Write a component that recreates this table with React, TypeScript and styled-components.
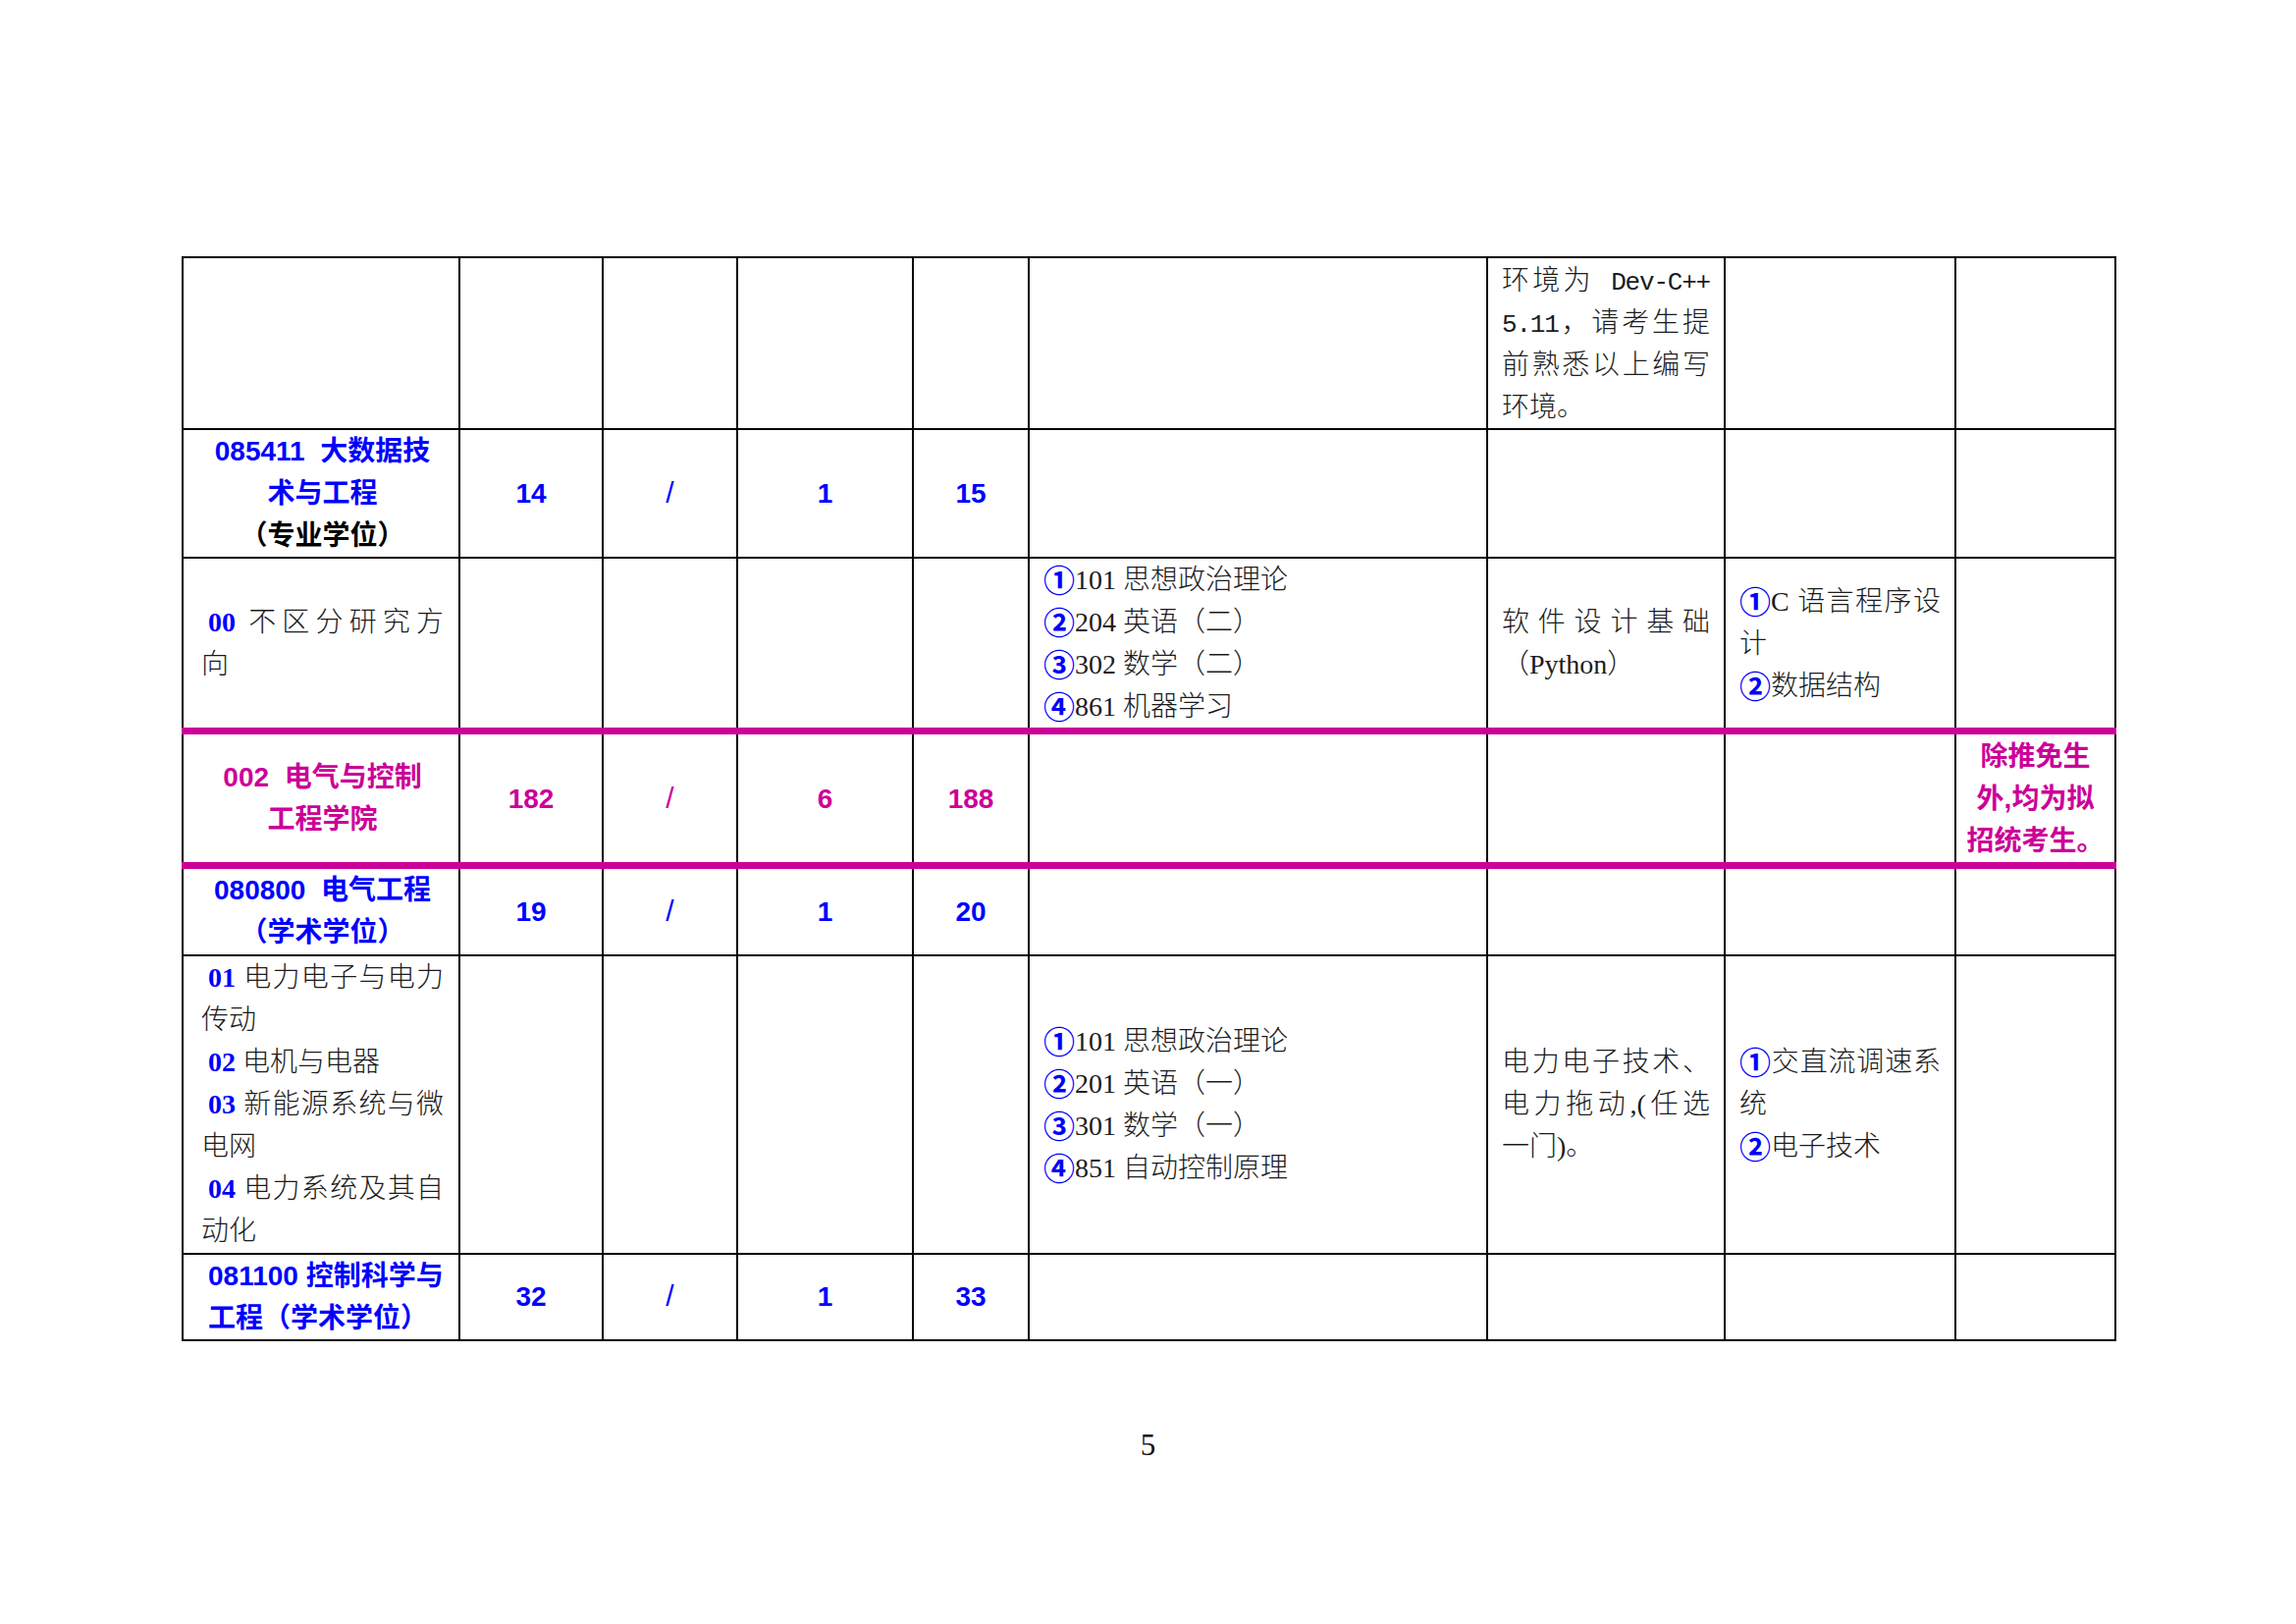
import styled, { createGlobalStyle } from "styled-components";

const BLUE = "#0000ff";
const PINK = "#cc0099";
const SERIF = `"Liberation Serif", "Noto Sans CJK SC", serif`;
const SANS = `"Liberation Sans", "Noto Sans CJK SC", sans-serif`;

type Tone = "blue" | "pink" | "black";
const toneColor = (t: Tone) => (t === "blue" ? BLUE : t === "pink" ? PINK : "#000000");

const widths = [282, 146, 137, 179, 118, 467, 242, 235, 163];

const App = () => {
    return (
        <>
            <GlobalStyle />
            <Page>
                <Sheet>
                    <colgroup>
                        {widths.map((w, i) => (
                            <Col key={i} $w={w} />
                        ))}
                    </colgroup>
                    <tbody>
                        <Row $h={175}>
                            <Cell $first />
                            <Cell />
                            <Cell />
                            <Cell />
                            <Cell />
                            <Cell />
                            <Cell>
                                <Line $justify>
                                    环境为<Mono> Dev-C++</Mono>
                                </Line>
                                <Line $justify>
                                    <Mono>5.11</Mono>，请考生提
                                </Line>
                                <Line $justify>前熟悉以上编写</Line>
                                <Line>环境。</Line>
                            </Cell>
                            <Cell />
                            <Cell />
                        </Row>

                        <Row $h={131}>
                            <Cell $first $align="center">
                                <Line>
                                    <Bold $tone="blue">085411{"\u00a0\u00a0"}大数据技</Bold>
                                </Line>
                                <Line>
                                    <Bold $tone="blue">术与工程</Bold>
                                </Line>
                                <Line>
                                    <Bold $tone="black">（专业学位）</Bold>
                                </Line>
                            </Cell>
                            <NumCells tone="blue" values={["14", "/", "1", "15"]} />
                            <Cell />
                            <Cell />
                            <Cell />
                            <Cell />
                        </Row>

                        <Row $h={175}>
                            <Cell $first>
                                <Line $justify $indent>
                                    <Code>00</Code> 不区分研究方
                                </Line>
                                <Line>向</Line>
                            </Cell>
                            <Cell />
                            <Cell />
                            <Cell />
                            <Cell />
                            <Cell>
                                <Line><Circ>①</Circ>101 思想政治理论</Line>
                                <Line><Circ>②</Circ>204 英语（二）</Line>
                                <Line><Circ>③</Circ>302 数学（二）</Line>
                                <Line><Circ>④</Circ>861 机器学习</Line>
                            </Cell>
                            <Cell>
                                <Line $justify>软件设计基础</Line>
                                <Line>（Python）</Line>
                            </Cell>
                            <Cell>
                                <Line $justify><Circ>①</Circ>C 语言程序设</Line>
                                <Line>计</Line>
                                <Line><Circ>②</Circ>数据结构</Line>
                            </Cell>
                            <Cell />
                        </Row>

                        <Row $h={137} $accent>
                            <Cell $first $align="center">
                                <Line>
                                    <Bold $tone="pink">002{"\u00a0\u00a0"}电气与控制</Bold>
                                </Line>
                                <Line>
                                    <Bold $tone="pink">工程学院</Bold>
                                </Line>
                            </Cell>
                            <NumCells tone="pink" values={["182", "/", "6", "188"]} />
                            <Cell />
                            <Cell />
                            <Cell />
                            <Cell $narrow $align="center">
                                <Line><Bold $tone="pink">除推免生</Bold></Line>
                                <Line><Bold $tone="pink">外,均为拟</Bold></Line>
                                <Line><Bold $tone="pink">招统考生。</Bold></Line>
                            </Cell>
                        </Row>

                        <Row $h={91}>
                            <Cell $first $align="center">
                                <Line>
                                    <Bold $tone="blue">080800{"\u00a0\u00a0"}电气工程</Bold>
                                </Line>
                                <Line>
                                    <Bold $tone="blue">（学术学位）</Bold>
                                </Line>
                            </Cell>
                            <NumCells tone="blue" values={["19", "/", "1", "20"]} />
                            <Cell />
                            <Cell />
                            <Cell />
                            <Cell />
                        </Row>

                        <Row $h={304}>
                            <Cell $first>
                                <Line $justify $indent><Code>01</Code> 电力电子与电力</Line>
                                <Line>传动</Line>
                                <Line $indent><Code>02</Code> 电机与电器</Line>
                                <Line $justify $indent><Code>03</Code> 新能源系统与微</Line>
                                <Line>电网</Line>
                                <Line $justify $indent><Code>04</Code> 电力系统及其自</Line>
                                <Line>动化</Line>
                            </Cell>
                            <Cell />
                            <Cell />
                            <Cell />
                            <Cell />
                            <Cell>
                                <Line><Circ>①</Circ>101 思想政治理论</Line>
                                <Line><Circ>②</Circ>201 英语（一）</Line>
                                <Line><Circ>③</Circ>301 数学（一）</Line>
                                <Line><Circ>④</Circ>851 自动控制原理</Line>
                            </Cell>
                            <Cell>
                                <Line $justify>电力电子技术、</Line>
                                <Line $justify>电力拖动,(任选</Line>
                                <Line>一门)。</Line>
                            </Cell>
                            <Cell>
                                <Line $justify><Circ>①</Circ>交直流调速系</Line>
                                <Line>统</Line>
                                <Line><Circ>②</Circ>电子技术</Line>
                            </Cell>
                            <Cell />
                        </Row>

                        <Row $h={88}>
                            <Cell $first>
                                <Line $indent>
                                    <Bold $tone="blue">081100 控制科学与</Bold>
                                </Line>
                                <Line $indent>
                                    <Bold $tone="blue">工程（学术学位）</Bold>
                                </Line>
                            </Cell>
                            <NumCells tone="blue" values={["32", "/", "1", "33"]} />
                            <Cell />
                            <Cell />
                            <Cell />
                            <Cell />
                        </Row>
                    </tbody>
                </Sheet>
                <PageNo>5</PageNo>
            </Page>
        </>
    );
};

const NumCells = ({ tone, values }: { tone: Tone; values: string[] }) => (
    <>
        {values.map((v, i) => (
            <Cell key={i} $align="center">
                <Bold $tone={tone} $thin={v === "/"}>
                    {v}
                </Bold>
            </Cell>
        ))}
    </>
);

export default App;

const GlobalStyle = createGlobalStyle`
    html, body {
        margin: 0;
        padding: 0;
        background: #ffffff;
    }
    body {
        font-family: ${SERIF};
        color: #1c1c1c;
    }
`;

const Page = styled.div`
    width: 2339px;
    height: 1654px;
    box-sizing: border-box;
    padding: 261px 0 0 185px;
    background: #ffffff;
`;

const Sheet = styled.table`
    width: 1969px;
    border-collapse: collapse;
    table-layout: fixed;
    font-size: 28px;
    line-height: 43px;
    font-weight: 300;
`;

const Col = styled.col<{ $w: number }>`
    width: ${({ $w }) => $w}px;
`;

const Row = styled.tr<{ $h: number; $accent?: boolean }>`
    height: ${({ $h }) => $h}px;
    & > td {
        ${({ $accent }) =>
            $accent &&
            `border-top: 7px solid ${PINK}; border-bottom: 7px solid ${PINK};`}
    }
`;

const Cell = styled.td<{ $align?: "left" | "center"; $first?: boolean; $narrow?: boolean }>`
    border: 2px solid #000000;
    padding: ${({ $first, $narrow }) => ($first ? "0 15px 0 18px" : $narrow ? "0 8px" : "0 14px")};
    vertical-align: middle;
    text-align: ${({ $align }) => $align ?? "left"};
`;

const Line = styled.div<{ $justify?: boolean; $indent?: boolean }>`
    display: block;
    height: 43px;
    ${({ $justify }) =>
        $justify ? "text-align: justify; text-align-last: justify;" : "white-space: nowrap;"}
    ${({ $indent }) => $indent && "padding-left: 7px;"}
`;

const Bold = styled.span<{ $tone: Tone; $thin?: boolean }>`
    font-family: ${SANS};
    font-weight: ${({ $thin }) => ($thin ? 400 : 700)};
    font-size: ${({ $thin }) => ($thin ? "30px" : "inherit")};
    line-height: 1;
    color: ${({ $tone }) => toneColor($tone)};
`;

const Code = styled.span`
    font-family: ${SERIF};
    font-weight: 700;
    line-height: 1;
    color: ${BLUE};
`;

const Circ = styled.span`
    display: inline-block;
    width: 32px;
    font-family: "Noto Sans CJK SC", sans-serif;
    font-weight: 700;
    font-size: 32px;
    line-height: 1;
    vertical-align: -3px;
    color: ${BLUE};
`;

const Mono = styled.span`
    font-family: "Liberation Mono", "Noto Sans CJK SC", monospace;
    font-size: 26px;
    letter-spacing: -1.2px;
    line-height: 1;
`;

const PageNo = styled.div`
    width: 1969px;
    margin-top: 84px;
    text-align: center;
    font-family: ${SERIF};
    font-size: 31px;
    line-height: 43px;
    color: #111111;
`;
